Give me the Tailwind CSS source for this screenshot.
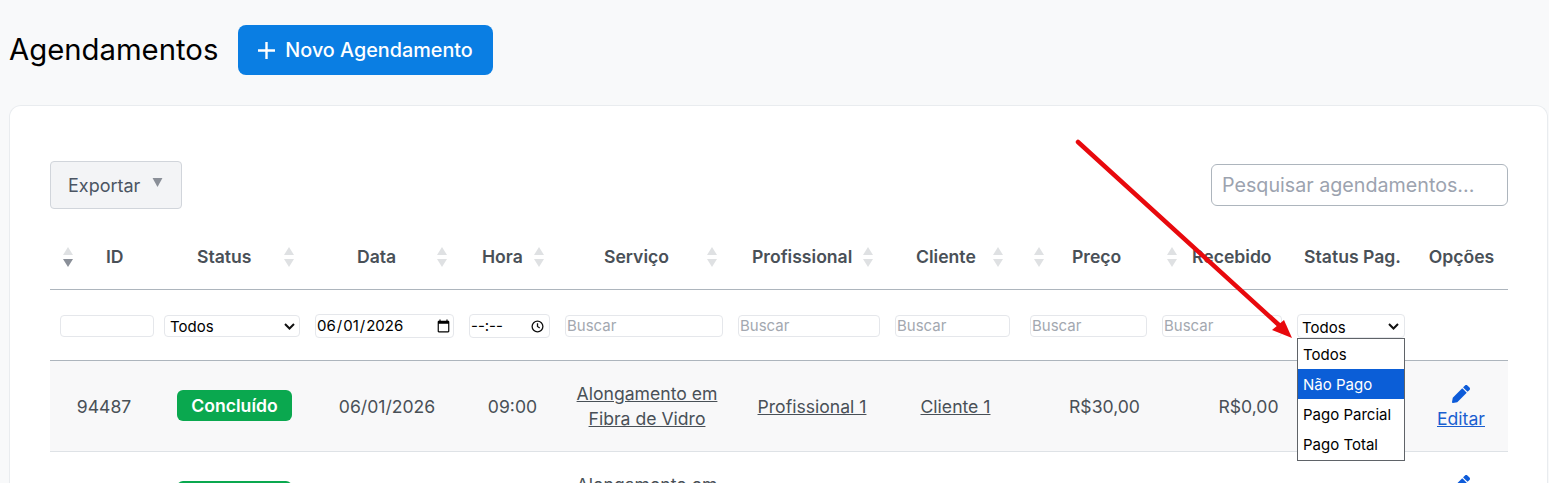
<!DOCTYPE html>
<html lang="pt-BR">
<head>
  <meta charset="UTF-8" />
  <title>Agendamentos</title>
  <script src="https://cdn.jsdelivr.net/npm/@tailwindcss/browser@4"></script>
</head>
<body class="relative h-[483px] overflow-hidden bg-[#f8f9fa] font-['Inter',sans-serif] text-[#495057]">

<header class="flex items-start gap-5 pl-[9px] pt-[25px] h-[105px]">
  <h1 class="text-[29.3px] leading-[50px] text-black">Agendamentos</h1>
  <button class="flex items-center gap-[10px] h-[50px] w-[255px] pl-5 pt-px rounded-lg bg-[#0a7ee3] text-white text-[19.8px] font-medium">
    <svg class="w-[17px] h-[17px]" viewBox="0 0 17 17" fill="none" stroke="currentColor" stroke-width="2.4"><path d="M8.5 0v17M0 8.5h17"/></svg>
    Novo Agendamento
  </button>
</header>

<main class="ml-[9px] mr-px h-[378px] overflow-hidden bg-white border border-b-0 border-[#e9ecef] rounded-t-xl pl-10 pr-[39px] pt-[55px] text-[17.6px]">
  <div class="flex items-center justify-between h-12">
    <button class="flex items-center h-12 w-[132px] pl-[17px] gap-3 bg-[#f3f4f6] border border-[#d1d5db] rounded-sm text-[18px] text-[#4b5563]">
      Exportar
      <svg class="w-[11px] h-[9px] mb-[6px]" viewBox="0 0 12 10" fill="#8a8f98"><path d="M0.5 0h11L6 10z"/></svg>
    </button>
    <input type="text" placeholder="Pesquisar agendamentos..." class="w-[297px] h-[42px] pl-[10px] pr-2 border border-[#adb5bd] rounded-md text-[19.7px] placeholder:text-[#9ca3af]">
  </div>

  <table class="table-fixed w-[1458px] mt-[15px] border-collapse text-center">
    <colgroup>
      <col class="w-[106px]"><col class="w-[151px]"><col class="w-[154px]"><col class="w-[96px]"><col class="w-[173px]"><col class="w-[157px]"><col class="w-[135px]"><col class="w-[132px]"><col class="w-[135px]"><col class="w-[123px]"><col class="w-[96px]">
    </colgroup>
    <thead>
      <tr class="h-[65px] border-b border-[#adb5bd] [&>th]:pt-[2px] [&>th]:font-semibold">
        <th><div class="flex items-center pl-3"><svg class="w-3 h-5" viewBox="0 0 12 20"><path d="M6 0l5 8H1z" fill="#dfe1e3"/><path d="M6 20l5-8H1z" fill="#8a8f98"/></svg><span class="ml-8">ID</span></div></th>
        <th><div class="flex items-center pl-[41px]">Status<svg class="w-3 h-5 ml-[31px]" viewBox="0 0 12 20" fill="#dfe1e3"><path d="M6 0l5 8H1zM6 20l5-8H1z"/></svg></div></th>
        <th><div class="flex items-center pl-[50px]">Data<svg class="w-3 h-5 ml-[40px]" viewBox="0 0 12 20" fill="#dfe1e3"><path d="M6 0l5 8H1zM6 20l5-8H1z"/></svg></div></th>
        <th><div class="flex items-center pl-[21px]">Hora<svg class="w-3 h-5 ml-[10px]" viewBox="0 0 12 20" fill="#dfe1e3"><path d="M6 0l5 8H1zM6 20l5-8H1z"/></svg></div></th>
        <th><div class="flex items-center pl-[47px]">Serviço<svg class="w-3 h-5 ml-[37px]" viewBox="0 0 12 20" fill="#dfe1e3"><path d="M6 0l5 8H1zM6 20l5-8H1z"/></svg></div></th>
        <th><div class="flex items-center pl-[22px]">Profissional<svg class="w-3 h-5 ml-[10px]" viewBox="0 0 12 20" fill="#dfe1e3"><path d="M6 0l5 8H1zM6 20l5-8H1z"/></svg></div></th>
        <th><div class="flex items-center pl-[29px]">Cliente<svg class="w-3 h-5 ml-[16px]" viewBox="0 0 12 20" fill="#dfe1e3"><path d="M6 0l5 8H1zM6 20l5-8H1z"/></svg></div></th>
        <th><div class="flex items-center pl-[11px]"><svg class="w-3 h-5" viewBox="0 0 12 20" fill="#dfe1e3"><path d="M6 0l5 8H1zM6 20l5-8H1z"/></svg><span class="ml-[27px]">Preço</span></div></th>
        <th><div class="flex items-center pl-[12px]"><svg class="w-3 h-5" viewBox="0 0 12 20" fill="#dfe1e3"><path d="M6 0l5 8H1zM6 20l5-8H1z"/></svg><span class="ml-[14px]">Recebido</span></div></th>
        <th class="whitespace-nowrap pl-[4px]">Status Pag.</th>
        <th class="pl-[3px]">Opções</th>
      </tr>
      <tr class="h-[71px] border-b border-[#adb5bd] [&>td]:pt-[3px] text-[15px]">
        <td><input type="text" class="block ml-2.5 w-[94px] h-[22px] border border-[#e5e7eb] rounded bg-white"></td>
        <td>
          <div class="relative ml-2 w-[136px]">
            <select class="block appearance-none w-full h-[22px] pl-[5px] border border-[#e5e7eb] rounded text-black bg-white"><option>Todos</option></select>
            <svg class="absolute right-[5px] top-[8px] w-[11px] h-[7px]" viewBox="0 0 11 7" fill="none" stroke="#111" stroke-width="2"><path d="M1 1l4.5 4.5L10 1"/></svg>
          </div>
        </td>
        <td><input type="date" value="2026-06-01" class="block ml-2 w-[139px] h-[24px] border border-[#e5e7eb] rounded text-black bg-white"></td>
        <td>
          <div class="flex items-center justify-between ml-2 w-[81px] h-[24px] pl-[1px] pr-[5px] border border-[#e5e7eb] rounded text-black bg-white">
            <input type="text" value="--:--" class="w-[50px]">
            <svg class="w-[13px] h-[13px]" viewBox="0 0 14 14" fill="none" stroke="#111" stroke-width="1.4"><circle cx="7" cy="7" r="5.8"/><path d="M7 3.5V7l2.4 1.6"/></svg>
          </div>
        </td>
        <td><input type="text" placeholder="Buscar" class="block ml-2 w-[158px] h-[22px] pl-px border border-[#e5e7eb] rounded placeholder:text-[#a3a8b0]"></td>
        <td><input type="text" placeholder="Buscar" class="block ml-2 w-[142px] h-[22px] pl-px border border-[#e5e7eb] rounded placeholder:text-[#a3a8b0]"></td>
        <td><input type="text" placeholder="Buscar" class="block ml-2 w-[115px] h-[22px] pl-px border border-[#e5e7eb] rounded placeholder:text-[#a3a8b0]"></td>
        <td><input type="text" placeholder="Buscar" class="block ml-2 w-[117px] h-[22px] pl-px border border-[#e5e7eb] rounded placeholder:text-[#a3a8b0]"></td>
        <td><input type="text" placeholder="Buscar" class="block ml-2 w-[120px] h-[22px] pl-px border border-[#e5e7eb] rounded placeholder:text-[#a3a8b0]"></td>
        <td>
          <div class="relative ml-2 w-[108px]">
            <select class="block appearance-none w-full h-[24px] pl-1 pt-[2px] border border-[#e5e7eb] rounded text-black bg-white"><option>Todos</option></select>
            <svg class="absolute right-[6px] top-[9px] w-[11px] h-[7px]" viewBox="0 0 11 7" fill="none" stroke="#111" stroke-width="2"><path d="M1 1l4.5 4.5L10 1"/></svg>
          </div>
        </td>
        <td></td>
      </tr>
    </thead>
    <tbody>
      <tr class="h-[91px] bg-[#f8f8f9] border-b border-[#dee2e6]">
        <td class="pl-[2px] pt-[3px]">94487</td>
        <td class="pl-1.5"><span class="inline-block w-[115px] leading-[31px] rounded-md bg-[#0aa84f] text-white font-semibold">Concluído</span></td>
        <td class="pl-1.5 pt-[3px]">06/01/2026</td>
        <td class="pl-[7px] pt-[3px]">09:00</td>
        <td class="pl-[7px] leading-[25px]"><a href="#" class="underline">Alongamento em<br>Fibra de Vidro</a></td>
        <td class="pl-[7px] pt-[3px]"><a href="#" class="underline">Profissional 1</a></td>
        <td class="pl-[2px] pt-[3px]"><a href="#" class="underline">Cliente 1</a></td>
        <td class="pl-[33px] pt-[3px]">R$30,00</td>
        <td class="pl-[54px] pt-[3px]">R$0,00</td>
        <td></td>
        <td class="pl-[2px] pt-[3px]"><a href="#" class="inline-flex flex-col items-center gap-1 leading-6 text-[#1a5fd0] underline">
          <svg class="w-[18px] h-[18px]" viewBox="0 0 512 512" fill="#0d5bd9"><path d="M497.9 142.1l-46.1 46.1c-4.7 4.7-12.3 4.7-17 0l-111-111c-4.7-4.7-4.7-12.3 0-17l46.1-46.1c18.7-18.7 49.1-18.7 67.9 0l60.1 60.1c18.8 18.7 18.8 49.1 0 67.9zM284.2 99.8L21.6 362.4.4 483.9c-2.9 16.4 11.4 30.6 27.8 27.8l121.5-21.3 262.6-262.6c4.7-4.7 4.7-12.3 0-17l-111-111c-4.8-4.7-12.4-4.7-17.1 0z"/></svg>
          Editar</a></td>
      </tr>
      <tr class="h-[91px]">
        <td></td>
        <td class="pl-1.5 align-top pt-[29px]"><span class="inline-block w-[115px] leading-[31px] rounded-md bg-[#0aa84f] text-white font-semibold">Concluído</span></td>
        <td></td>
        <td></td>
        <td class="pl-[7px] align-top pt-5 leading-[25px]"><a href="#" class="underline">Alongamento em</a></td>
        <td></td><td></td><td></td><td></td><td></td>
        <td class="pl-[2px] align-top pt-[23px]"><svg class="mx-auto w-[18px] h-[18px]" viewBox="0 0 512 512" fill="#0d5bd9"><path d="M497.9 142.1l-46.1 46.1c-4.7 4.7-12.3 4.7-17 0l-111-111c-4.7-4.7-4.7-12.3 0-17l46.1-46.1c18.7-18.7 49.1-18.7 67.9 0l60.1 60.1c18.8 18.7 18.8 49.1 0 67.9zM284.2 99.8L21.6 362.4.4 483.9c-2.9 16.4 11.4 30.6 27.8 27.8l121.5-21.3 262.6-262.6c4.7-4.7 4.7-12.3 0-17l-111-111c-4.8-4.7-12.4-4.7-17.1 0z"/></svg></td>
      </tr>
    </tbody>
  </table>
</main>

<!-- open dropdown of the Status Pag. filter -->
<ul class="absolute left-[1297px] top-[338px] w-[108px] h-[123px] bg-white border border-[#5f6368] text-[15px] text-black">
  <li class="h-[30px] pl-[5px] pt-px leading-[30px]">Todos</li>
  <li class="h-[30px] pl-[5px] pt-px leading-[30px] bg-[#0b5ed7] text-white">Não Pago</li>
  <li class="h-[30px] pl-[5px] pt-px leading-[30px]">Pago Parcial</li>
  <li class="h-[30px] pl-[5px] pt-px leading-[30px]">Pago Total</li>
</ul>

<!-- annotation arrow -->
<svg class="absolute left-0 top-0 w-[1549px] h-[483px] pointer-events-none" viewBox="0 0 1549 483" fill="none">
  <path d="M1078 142L1280 326" stroke="#e8090d" stroke-width="4.5" stroke-linecap="round"/>
  <path d="M1292 338L1272 330L1284 320z" fill="#e8090d"/>
</svg>

</body>
</html>
